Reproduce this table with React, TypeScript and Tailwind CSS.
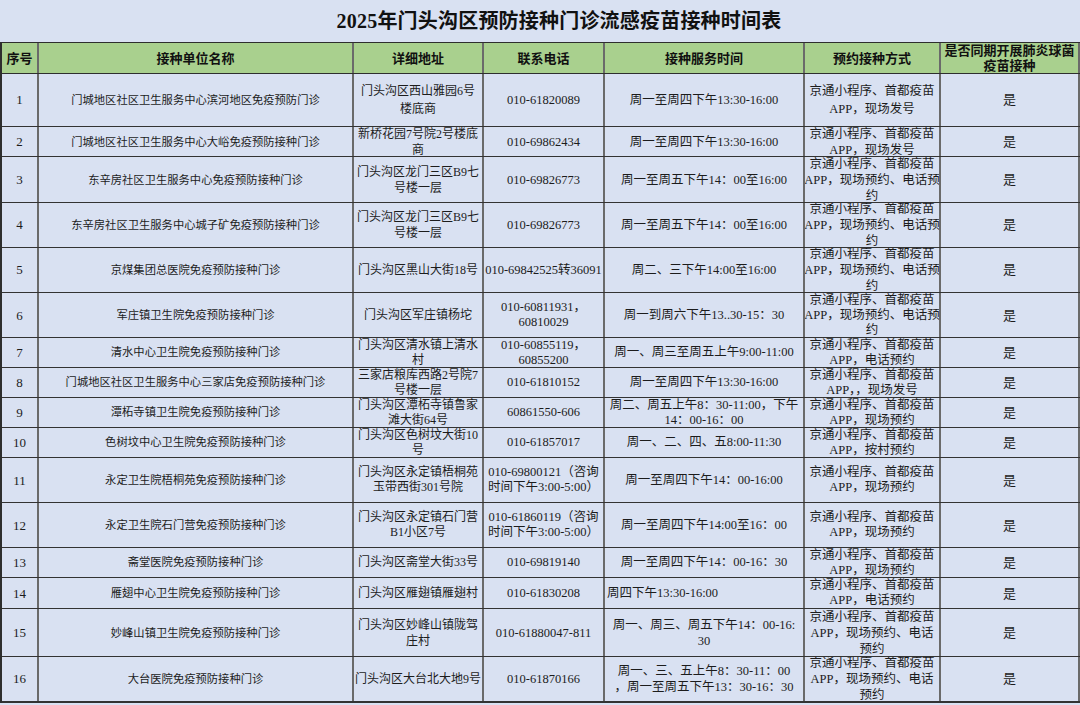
import React from 'react';

type Row = {
  no: string;
  name: string;
  addr: string[];
  phone: string[];
  time: string[];
  way: string[];
  h: string;
  lh: string;
  timeLeft?: boolean;
};

const cols = ['w-[38px]', 'w-[315px]', 'w-[130px]', 'w-[121px]', 'w-[200px]', 'w-[136px]', 'w-[139px]'];

const WAY_SITE = ['京通小程序、首都疫苗', 'APP，现场发号'];
const WAY_CALL = ['京通小程序、首都疫苗', 'APP，现场预约、电话预', '约'];
const WAY_BOOK = ['京通小程序、首都疫苗', 'APP，现场预约'];
const WAY_CALL2 = ['京通小程序、首都疫苗', 'APP，现场预约、电话', '预约'];

const rows: Row[] = [
  { no: '1', name: '门城地区社区卫生服务中心滨河地区免疫预防门诊', addr: ['门头沟区西山雅园6号', '楼底商'], phone: ['010-61820089'], time: ['周一至周四下午13:30-16:00'], way: WAY_SITE, h: 'h-[53px]', lh: 'leading-[18px]' },
  { no: '2', name: '门城地区社区卫生服务中心大峪免疫预防接种门诊', addr: ['新桥花园7号院2号楼底', '商'], phone: ['010-69862434'], time: ['周一至周四下午13:30-16:00'], way: WAY_SITE, h: 'h-[30px]', lh: 'leading-[16px]' },
  { no: '3', name: '东辛房社区卫生服务中心免疫预防接种门诊', addr: ['门头沟区龙门三区B9七', '号楼一层'], phone: ['010-69826773'], time: ['周一至周五下午14：00至16:00'], way: WAY_CALL, h: 'h-[46px]', lh: 'leading-[16px]' },
  { no: '4', name: '东辛房社区卫生服务中心城子矿免疫预防接种门诊', addr: ['门头沟区龙门三区B9七', '号楼一层'], phone: ['010-69826773'], time: ['周一至周五下午14：00至16:00'], way: WAY_CALL, h: 'h-[45px]', lh: 'leading-[16px]' },
  { no: '5', name: '京煤集团总医院免疫预防接种门诊', addr: ['门头沟区黑山大街18号'], phone: ['010-69842525转36091'], time: ['周二、三下午14:00至16:00'], way: WAY_CALL, h: 'h-[45px]', lh: 'leading-[16px]' },
  { no: '6', name: '军庄镇卫生院免疫预防接种门诊', addr: ['门头沟区军庄镇杨坨'], phone: ['010-60811931，', '60810029'], time: ['周一到周六下午13..30-15：30'], way: WAY_CALL, h: 'h-[45px]', lh: 'leading-[15px]' },
  { no: '7', name: '清水中心卫生院免疫预防接种门诊', addr: ['门头沟区清水镇上清水', '村'], phone: ['010-60855119，', '60855200'], time: ['周一、周三至周五上午9:00-11:00'], way: ['京通小程序、首都疫苗', 'APP，电话预约'], h: 'h-[30px]', lh: 'leading-[15px]' },
  { no: '8', name: '门城地区社区卫生服务中心三家店免疫预防接种门诊', addr: ['三家店粮库西路2号院7', '号楼一层'], phone: ['010-61810152'], time: ['周一至周四下午13:30-16:00'], way: ['京通小程序、首都疫苗', 'APP，，现场发号'], h: 'h-[30px]', lh: 'leading-[15px]' },
  { no: '9', name: '潭柘寺镇卫生院免疫预防接种门诊', addr: ['门头沟区潭柘寺镇鲁家', '滩大街64号'], phone: ['60861550-606'], time: ['周二、周五上午8：30-11:00，下午', '14：00-16：00'], way: WAY_BOOK, h: 'h-[30px]', lh: 'leading-[15px]' },
  { no: '10', name: '色树坟中心卫生院免疫预防接种门诊', addr: ['门头沟区色树坟大街10', '号'], phone: ['010-61857017'], time: ['周一、二、四、五8:00-11:30'], way: ['京通小程序、首都疫苗', 'APP，按村预约'], h: 'h-[30px]', lh: 'leading-[15px]' },
  { no: '11', name: '永定卫生院梧桐苑免疫预防接种门诊', addr: ['门头沟区永定镇梧桐苑', '玉带西街301号院'], phone: ['010-69800121（咨询', '时间下午3:00-5:00）'], time: ['周一至周四下午14：00-16:00'], way: WAY_BOOK, h: 'h-[45px]', lh: 'leading-[15px]' },
  { no: '12', name: '永定卫生院石门营免疫预防接种门诊', addr: ['门头沟区永定镇石门营', 'B1小区7号'], phone: ['010-61860119（咨询', '时间下午3:00-5:00）'], time: ['周一至周四下午14:00至16：00'], way: WAY_BOOK, h: 'h-[45px]', lh: 'leading-[15px]' },
  { no: '13', name: '斋堂医院免疫预防接种门诊', addr: ['门头沟区斋堂大街33号'], phone: ['010-69819140'], time: ['周一至周四下午14：00-16：30'], way: WAY_BOOK, h: 'h-[30px]', lh: 'leading-[15px]' },
  { no: '14', name: '雁翅中心卫生院免疫预防接种门诊', addr: ['门头沟区雁翅镇雁翅村'], phone: ['010-61830208'], time: ['周四下午13:30-16:00'], way: ['京通小程序、首都疫苗', 'APP，电话预约'], h: 'h-[31px]', lh: 'leading-[15px]', timeLeft: true },
  { no: '15', name: '妙峰山镇卫生院免疫预防接种门诊', addr: ['门头沟区妙峰山镇陇驾', '庄村'], phone: ['010-61880047-811'], time: ['周一、周三、周五下午14：00-16:', '30'], way: WAY_CALL2, h: 'h-[48px]', lh: 'leading-[16px]' },
  { no: '16', name: '大台医院免疫预防接种门诊', addr: ['门头沟区大台北大地9号'], phone: ['010-61870166'], time: ['周一、三、五上午8：30-11：00', '，周一至周五下午13：30-16：30'], way: WAY_CALL2, h: 'h-[46px]', lh: 'leading-[16px]' },
];

function Cell({ lines, width, className = '', left = false }: { lines: string[]; width: string; className?: string; left?: boolean }) {
  return (
    <div className={`${width} flex h-full shrink-0 flex-col justify-center overflow-hidden border-r-2 border-r-[#6a6a6a] ${left ? 'items-start pl-[2px]' : 'items-center'} ${className}`}>
      {lines.map((line, i) => (
        <span key={i} className="whitespace-nowrap">
          {line}
        </span>
      ))}
    </div>
  );
}

export default function App() {
  const headers = [['序号'], ['接种单位名称'], ['详细地址'], ['联系电话'], ['接种服务时间'], ['预约接种方式'], ['是否同期开展肺炎球菌', '疫苗接种']];

  return (
    <div className="h-[705px] w-[1080px] overflow-hidden bg-[#d9e1f2] font-['Liberation_Serif','Noto_Sans_CJK_SC',serif] text-[#1c1c1c]">
      <div className="flex h-[43px] items-center justify-center border-b border-b-[#2e2e2e] pl-[38px] text-[20px] font-bold tracking-[0.2px] text-[#111]">
        2025年门头沟区预防接种门诊流感疫苗接种时间表
      </div>

      <div className="border-l-2 border-l-[#2e2e2e]">
        <div className="flex h-[31px] border-b border-b-[#2e2e2e] bg-[#a9d08e] text-[13px] font-bold leading-[15px] text-[#111]">
          {headers.map((h, i) => (
            <Cell key={i} lines={h} width={i === 0 ? 'w-[37px]' : cols[i]} />
          ))}
        </div>

        {rows.map((r, idx) => (
          <div
            key={r.no}
            className={`flex ${r.h} ${r.lh} ${idx === rows.length - 1 ? 'border-b-2' : 'border-b'} border-b-[#333] text-[12.5px]`}
          >
            <Cell lines={[r.no]} width="w-[37px]" className="text-[13px]" />
            <Cell lines={[r.name]} width={cols[1]} className="text-[11.3px]" />
            <Cell lines={r.addr} width={cols[2]} className="text-[12px]" />
            <Cell lines={r.phone} width={cols[3]} />
            <Cell lines={r.time} width={cols[4]} left={r.timeLeft} />
            <Cell lines={r.way} width={cols[5]} />
            <Cell lines={['是']} width={cols[6]} className="text-[13px]" />
          </div>
        ))}
      </div>
    </div>
  );
}
